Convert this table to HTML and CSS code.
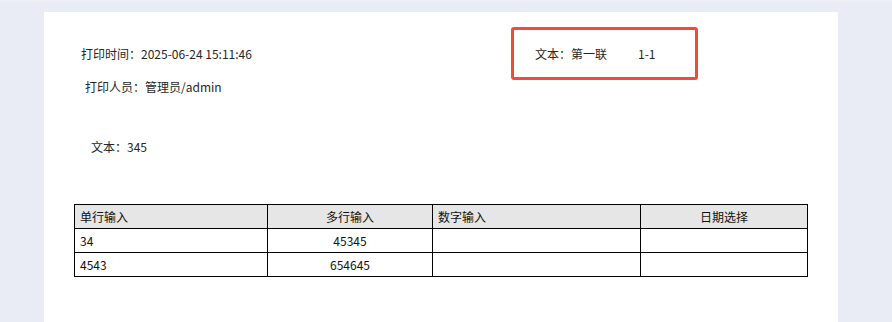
FILE: index.html
```html
<!DOCTYPE html>
<html lang="zh-CN">
<head>
  <meta charset="UTF-8" />
  <meta name="viewport" content="width=device-width, initial-scale=1.0" />
  <title>打印预览</title>
  <link rel="stylesheet" href="styles.css">
</head>
<body>
  <div class="topbar"></div>
  <div class="page">
    <div class="head">
      <div class="info">
        <p class="line">打印时间：2025-06-24 15:11:46</p>
        <p class="line user">打印人员：管理员/admin</p>
      </div>
      <div class="copy-box">
        <span>文本：第一联</span><span class="copy-no">1-1</span>
      </div>
    </div>

    <p class="line field">文本：345</p>

    <table class="grid">
      <colgroup>
        <col style="width: 193px">
        <col style="width: 165px">
        <col style="width: 208px">
        <col style="width: 167px">
      </colgroup>
      <thead>
        <tr>
          <th>单行输入</th>
          <th class="center">多行输入</th>
          <th>数字输入</th>
          <th class="center">日期选择</th>
        </tr>
      </thead>
      <tbody>
        <tr>
          <td>34</td>
          <td class="center">45345</td>
          <td></td>
          <td></td>
        </tr>
        <tr>
          <td>4543</td>
          <td class="center">654645</td>
          <td></td>
          <td></td>
        </tr>
      </tbody>
    </table>
  </div>
</body>
</html>
```

FILE: styles.css
```css
body {
  margin: 0;
  background: #e9ecf4;
  font-family: "Noto Sans CJK SC", "Noto Sans", sans-serif;
  font-size: 12px;
  color: #262626;
  overflow: hidden;
}
.topbar {
  height: 2px;
  background: #eef0f6;
}
.page {
  margin: 10px 0 0 44px;
  width: 794px;
  height: 320px;
  background: #fff;
  padding: 15px 0 0 37px;
  box-sizing: border-box;
}
.head {
  display: grid;
  grid-template-columns: 430px 187px;
  align-items: start;
}
.line {
  margin: 0;
  line-height: 18px;
  height: 18px;
  white-space: nowrap;
}
.info {
  padding-top: 18px;
}
.user {
  margin-top: 15px;
  padding-left: 4px;
}
.copy-box {
  height: 53px;
  box-sizing: border-box;
  border: 3px solid #ee4c40;
  border-radius: 3px;
  padding: 15px 0 0 21px;
  line-height: 18px;
  white-space: nowrap;
}
.copy-no {
  margin-left: 31px;
}
.field {
  margin-top: 42px;
  padding-left: 10px;
}
.grid {
  margin: 48px 0 0 -7px;
  border-collapse: collapse;
  table-layout: fixed;
  width: 734px;
  color: #111;
}
.grid th,
.grid td {
  border: 1px solid #000;
  height: 24px;
  padding: 0 5px;
  font-weight: normal;
  text-align: left;
  line-height: 18px;
  box-sizing: border-box;
}
.grid th {
  background: #e6e6e6;
}
.grid .center {
  text-align: center;
}
```
